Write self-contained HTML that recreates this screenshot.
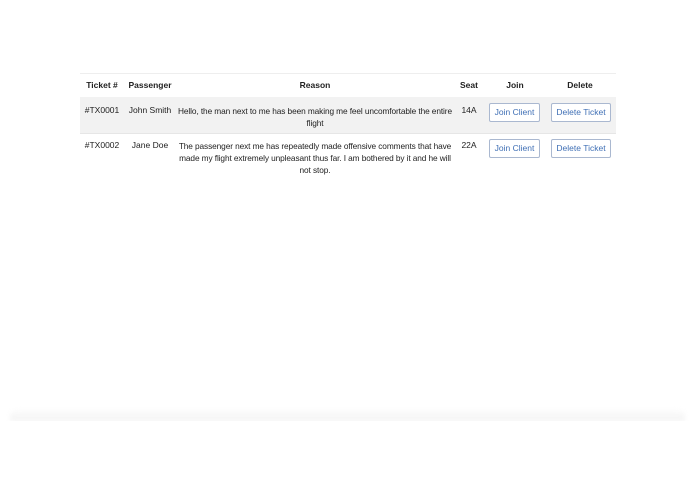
<!DOCTYPE html>
<html><head><style>
body{margin:0;width:695px;height:494px;background:#fff;position:relative;overflow:hidden;font-family:"Liberation Sans",sans-serif;color:#222;font-size:8.5px}
.a{position:absolute;white-space:nowrap}
.c{text-align:center}
.b{font-weight:bold}
.btn{position:absolute;border:1px solid #aab8d0;border-radius:2px;background:#fff;color:#3f6fb5;font-size:8.5px;text-align:center;line-height:17px;height:17px}
</style></head><body>
<div class="a" style="left:80px;top:73px;width:536px;height:1px;background:#eee"></div>
<div class="a" style="left:80px;top:97px;width:536px;height:36px;background:#f2f2f2"></div>
<div class="a" style="left:80px;top:133px;width:536px;height:1px;background:#e6e6e6"></div>
<div class="a b c" style="left:80px;top:80px;width:44px">Ticket #</div>
<div class="a b c" style="left:125px;top:80px;width:50px">Passenger</div>
<div class="a b c" style="left:180px;top:80px;width:270px">Reason</div>
<div class="a b c" style="left:455px;top:80px;width:28px">Seat</div>
<div class="a b c" style="left:490px;top:80px;width:50px">Join</div>
<div class="a b c" style="left:550px;top:80px;width:60px">Delete</div>

<div class="a c" style="left:80px;top:105px;width:44px">#TX0001</div>
<div class="a c" style="left:125px;top:105px;width:50px">John Smith</div>
<div class="a c" style="left:160px;top:105px;width:310px;line-height:12px;font-size:8.3px;letter-spacing:-0.1px">Hello, the man next to me has been making me feel uncomfortable the entire<br>flight</div>
<div class="a c" style="left:455px;top:105px;width:28px">14A</div>
<div class="btn" style="left:489px;top:103px;width:49px">Join Client</div>
<div class="btn" style="left:551px;top:103px;width:58px">Delete Ticket</div>

<div class="a c" style="left:80px;top:140px;width:44px">#TX0002</div>
<div class="a c" style="left:125px;top:140px;width:50px">Jane Doe</div>
<div class="a c" style="left:160px;top:140px;width:310px;line-height:12px;font-size:8.3px;letter-spacing:-0.1px">The passenger next me has repeatedly made offensive comments that have<br>made my flight extremely unpleasant thus far. I am bothered by it and he will<br>not stop.</div>
<div class="a c" style="left:455px;top:140px;width:28px">22A</div>
<div class="btn" style="left:489px;top:139px;width:49px">Join Client</div>
<div class="btn" style="left:551px;top:139px;width:58px">Delete Ticket</div>

<div class="a" style="left:10px;top:408px;width:675px;height:13px;background:linear-gradient(#fff,#f3f3f3);border-radius:8px 8px 0 0;filter:blur(2px)"></div>
<div class="a" style="left:0;top:421px;width:695px;height:73px;background:#fff"></div>
</body></html>
